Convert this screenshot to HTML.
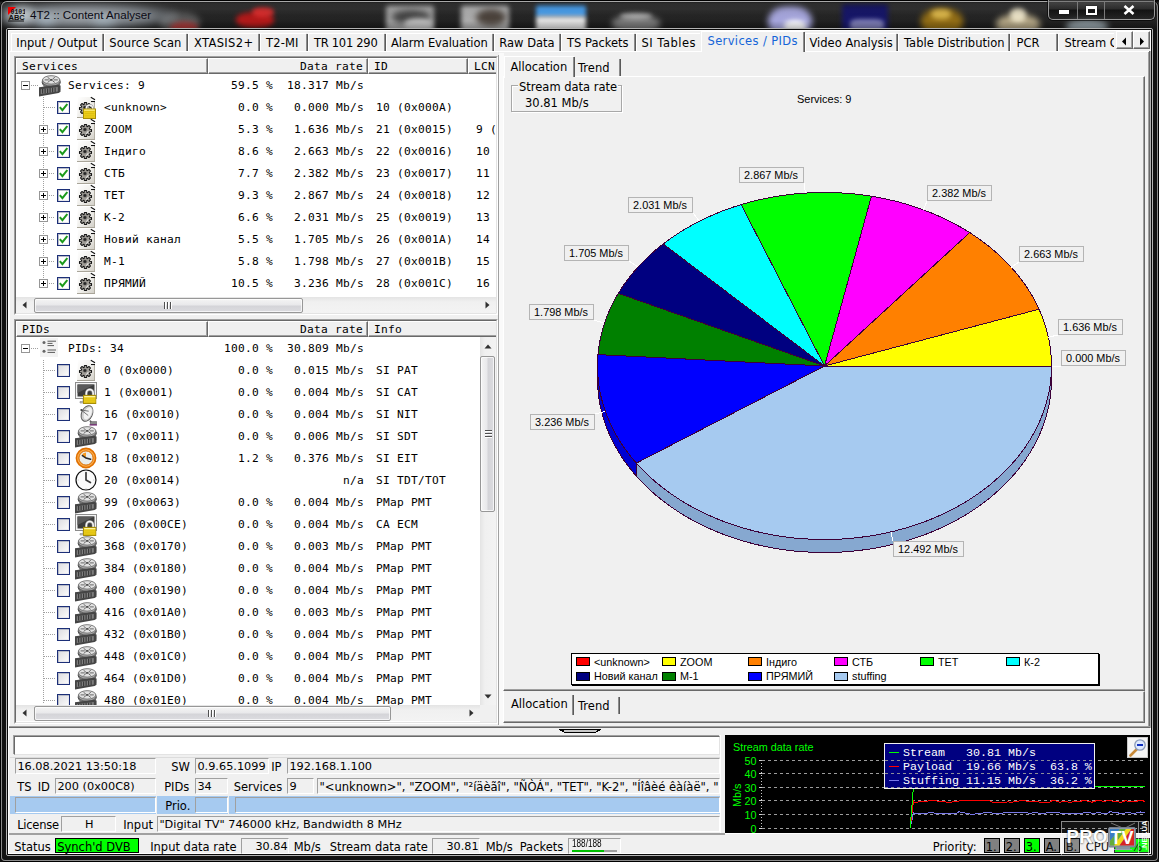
<!DOCTYPE html>
<html lang="en"><head><meta charset="utf-8"><title>4T2 :: Content Analyser</title>
<style>
html,body{margin:0;padding:0;background:#000}
#w{position:relative;width:1159px;height:862px;overflow:hidden;background:#2a2a2a;font-family:"DejaVu Sans","Liberation Sans",sans-serif;font-size:11.5px;line-height:14px;color:#000}
#w div,#w span,#w svg{position:absolute;box-sizing:border-box}
.t{white-space:pre;height:14px}
.m{font-family:"DejaVu Sans Mono","Liberation Mono",monospace;font-size:11.2px;letter-spacing:.26px;white-space:pre;height:14px;line-height:14px}
.ar{font-family:"Liberation Sans",sans-serif;font-size:12px;white-space:pre;line-height:14px}
.sep{width:2px;border-left:1px solid #8c8c8c;border-right:1px solid #5a5a5a}
.sunk2{border:1px solid;border-color:#a0a0a0 #fff #fff #a0a0a0}
.sunk2>i{position:absolute;left:0;top:0;right:0;bottom:0;border:1px solid;border-color:#696969 #e3e3e3 #e3e3e3 #696969}
.fld{border:1px solid;border-color:#a0a0a0 #fff #fff #a0a0a0}
.hd{background:#f0f0f0;border:1px solid;border-color:#fff #696969 #696969 #fff;box-shadow:inset -1px -1px 0 #a0a0a0}
.cb{width:13px;height:13px;border:1px solid #1c2f78;background:#fff;box-shadow:inset 1px 1px 0 #b8bcc8,inset -1px -1px 0 #e8e8ee}
.cb.e{background:linear-gradient(135deg,#dcdce0,#fcfcfc)}
.ex{width:9px;height:9px;border:1px solid #969696;background:#fff}
.ex:before{content:"";position:absolute;left:1px;top:3px;width:5px;height:1px;background:#000}
.ex.p:after{content:"";position:absolute;left:3px;top:1px;width:1px;height:5px;background:#000}
.dh{height:1px;background-image:linear-gradient(90deg,#a0a0a0 50%,transparent 50%);background-size:2px 1px}
.dv{width:1px;background-image:linear-gradient(180deg,#a0a0a0 50%,transparent 50%);background-size:1px 2px}
.sbh{background:linear-gradient(180deg,#e4e4e4,#f0f0f0 30%,#f3f3f3)}
.sbv{background:linear-gradient(90deg,#e4e4e4,#f0f0f0 30%,#f3f3f3)}
.thh{border:1px solid #979797;border-radius:2px;background:linear-gradient(180deg,#f4f4f4 0,#e9e9eb 45%,#d4d4d8 55%,#dcdce0 100%);box-shadow:inset 0 0 0 1px rgba(255,255,255,.7)}
.thv{border:1px solid #979797;border-radius:2px;background:linear-gradient(90deg,#f4f4f4 0,#e9e9eb 45%,#d4d4d8 55%,#dcdce0 100%);box-shadow:inset 0 0 0 1px rgba(255,255,255,.7)}
.lb{height:15px;border:1px solid #b4b4b4;background:#f0f0f0;font-family:"Liberation Sans",sans-serif;font-size:12px;line-height:13px;text-align:center;white-space:pre}
</style></head><body><div id="w">
<svg width="0" height="0" style="left:0;top:0"><defs>
<symbol id="film" viewBox="0 0 22 22">
 <ellipse cx="12.2" cy="7.6" rx="9" ry="5" fill="#8f8f8f" stroke="#4a4a4a" stroke-width="1"/>
 <ellipse cx="12.2" cy="6.2" rx="9" ry="5" fill="#a8a8a8" stroke="#5a5a5a" stroke-width=".9"/>
 <ellipse cx="12.2" cy="4.9" rx="8.6" ry="4.2" fill="#e2e2e2" stroke="#6a6a6a" stroke-width=".8"/>
 <ellipse cx="12.2" cy="4.9" rx="1.5" ry=".9" fill="#444"/>
 <path d="M5.6 4.9h4.2M14.6 4.9h4.2M8.6 2.3l2.2 1.7M15.8 2.3l-2.2 1.7M8.6 7.5l2.2-1.7M15.8 7.5l-2.2-1.7" stroke="#666" stroke-width="1"/>
 <path d="M4.5 10Q12 15.5 21.2 10v5Q12 19 4.5 14.5Z" fill="#7c7c7c"/>
 <path d="M0 12.2l19.6-2.4 1.9.9v6l-1.9 1.4L0 21.4Z" fill="#454545"/>
 <path d="M1.8 14.3l17-2.2v4.3l-17 2.6Z" fill="#7e7e7e"/>
 <path d="M3.6 14v4.6M6.1 13.7v4.6M8.6 13.4v4.6M11.1 13.1v4.6M13.6 12.8v4.6M16.1 12.5v4.6" stroke="#3a3a3a" stroke-width="1.2"/>
</symbol>
<symbol id="gear" viewBox="0 0 20 22">
 <defs><linearGradient id="pg" x1="0" y1="0" x2="1" y2="1"><stop offset="0" stop-color="#ffffff"/><stop offset=".55" stop-color="#efeeea"/><stop offset="1" stop-color="#cfccc4"/></linearGradient>
 <radialGradient id="gg" cx=".45" cy=".42" r=".6"><stop offset="0" stop-color="#181818"/><stop offset=".17" stop-color="#3a3a3a"/><stop offset=".3" stop-color="#9a9791"/><stop offset="1" stop-color="#b4b1ab"/></radialGradient></defs>
 <path d="M1 1h13l4 3.5V22H0Z" fill="url(#pg)"/>
 <path d="M17.5 5v17" stroke="#b3afa4" stroke-width="1"/>
 <path d="M0 21.5h18" stroke="#a9a599" stroke-width="1"/>
 <path d="M14 1.2l4 2.6v1.8h-4Z" fill="#fff"/>
 <path d="M13.8 1.2l4.2 2.6" fill="none" stroke="#111" stroke-width="1.1"/>
 <path d="M14 5.5h4" stroke="#111" stroke-width="1.1"/>
 <g transform="translate(8.5,12.5)">
  <path d="M-1.10 -6.00L1.10 -6.00L1.33 -4.09L1.96 -3.83L3.46 -5.02L5.02 -3.46L3.83 -1.96L4.09 -1.33L6.00 -1.10L6.00 1.10L4.09 1.33L3.83 1.96L5.02 3.46L3.46 5.02L1.96 3.83L1.33 4.09L1.10 6.00L-1.10 6.00L-1.33 4.09L-1.96 3.83L-3.46 5.02L-5.02 3.46L-3.83 1.96L-4.09 1.33L-6.00 1.10L-6.00 -1.10L-4.09 -1.33L-3.83 -1.96L-5.02 -3.46L-3.46 -5.02L-1.96 -3.83L-1.33 -4.09Z" fill="url(#gg)" stroke="#141414" stroke-width="1.05" stroke-linejoin="round"/>
  <path d="M2.6 .6a2.8 2.8 0 0 1-2.2 2.4" fill="none" stroke="#f4f4f4" stroke-width="1"/>
 </g>
</symbol>
<symbol id="lock" viewBox="0 0 13 14" preserveAspectRatio="none">
 <path d="M3.2 7V4.6a3.3 3.3 0 0 1 6.600 0V7" fill="none" stroke="#8c8c8c" stroke-width="2.600"/>
 <path d="M3.2 7V4.6a3.3 3.3 0 0 1 6.600 0V7" fill="none" stroke="#f6f6f6" stroke-width="1.500"/>
 <rect x=".5" y="6.500" width="12" height="7" fill="#f0d21e" stroke="#a88e08" stroke-width="1"/>
 <path d="M1.500 8.800h10M1.500 10.600h10M1.500 12.300h10" stroke="#d4b40c" stroke-width=".7"/>
 <path d="M1.200 7.500h10.600" stroke="#fdf3a0" stroke-width="1"/>
</symbol>
<symbol id="mon" viewBox="0 0 22 22">
 <rect x=".5" y=".5" width="21" height="16" fill="#f4f4f4" stroke="#8c8c8c"/>
 <rect x="2.5" y="2.5" width="17" height="12" fill="#3c3c3c"/>
 <path d="M2.5 2.5h17L2.5 11Z" fill="#5a5a5a"/>
 <path d="M8 17h6v2.5h3v1.5H5v-1.5h3Z" fill="#bdbdbd" stroke="#8a8a8a" stroke-width=".6"/>
</symbol>
<symbol id="dish" viewBox="0 0 22 22">
 <ellipse cx="11" cy="9.5" rx="5.4" ry="8.2" transform="rotate(24 11 9.5)" fill="#cfcfcf" stroke="#555" stroke-width=".9"/>
 <ellipse cx="11.8" cy="9.3" rx="4" ry="7" transform="rotate(24 11.8 9.3)" fill="#f2f2f2" stroke="#b9b9b9" stroke-width=".5"/>
 <path d="M5.2 6l7 5.5M5.2 6l7.5 1.2" stroke="#666" stroke-width=".9"/>
 <circle cx="5.4" cy="6" r="1.1" fill="#444"/>
 <path d="M14 16.5l1.5 2.2" stroke="#777" stroke-width="1.6"/>
 <rect x="14.2" y="17.6" width="6.4" height="2.6" fill="#8a8a8a" stroke="#555" stroke-width=".5"/>
 <path d="M13.6 20.9h7.4" stroke="#601060" stroke-width="1.2"/>
</symbol>
<symbol id="clko" viewBox="0 0 22 22">
 <circle cx="11" cy="11" r="9.6" fill="#f08a18" stroke="#e07000" stroke-width="1.6"/>
 <circle cx="11" cy="11" r="8.2" fill="none" stroke="#ffc070" stroke-width=".7"/>
 <circle cx="11" cy="11" r="7" fill="#e9eceb" stroke="#d86c00" stroke-width=".8"/>
 <path d="M11 11L6.6 8.4A5.2 5.2 0 0 1 11 5.4Z" fill="#f59a20"/>
 <path d="M7.4 8.6L11 11l4.6 1.3" fill="none" stroke="#26282c" stroke-width="1.5" stroke-linecap="round"/>
</symbol>
<symbol id="clkw" viewBox="0 0 22 22">
 <circle cx="11" cy="11" r="10" fill="#fafafa" stroke="#101010" stroke-width="1.2"/>
 <path d="M11 19.3v.9M2.8 11h.9M19.2 11h-.9" stroke="#b0b0b0" stroke-width=".8"/>
 <path d="M11 3.6V11l4.4 2.6" fill="none" stroke="#3a3a3a" stroke-width="1.7" stroke-linecap="round" stroke-linejoin="round"/>
</symbol>
<symbol id="lst" viewBox="0 0 18 19">
 <rect width="18" height="19" fill="#f2f2f2"/>
 <circle cx="4" cy="4.500" r="1.500" fill="#666"/><circle cx="4" cy="13.300" r="1.500" fill="#666"/>
 <path d="M7.500 3.200h8.500M7.500 5.400h5M7.500 7.600h6.500M7.500 12h8.500M7.500 14.400h7.500" stroke="#5a5a5a" stroke-width="1"/>
</symbol>
<symbol id="lock2" viewBox="0 0 13 15" preserveAspectRatio="none">
 <path d="M3.400 6V4.200a3.100 3.100 0 0 1 6.200 0V6" fill="none" stroke="#8c8c8c" stroke-width="2.400"/>
 <path d="M3.400 6V4.200a3.100 3.100 0 0 1 6.200 0V6" fill="none" stroke="#f6f6f6" stroke-width="1.300"/>
 <rect x=".5" y="5" width="12" height="9.500" fill="#f0d21e" stroke="#a88e08" stroke-width="1"/>
 <path d="M1.500 7.600h10M1.500 9.400h10M1.500 11.200h10M1.500 13h10" stroke="#d4b40c" stroke-width=".7"/>
 <path d="M1.200 6.100h10.600" stroke="#fdf3a0" stroke-width="1"/>
</symbol>
<symbol id="chk" viewBox="0 0 9 9"><path d="M.8 4.2l2.6 3L8.3 1" fill="none" stroke="#1c9a1c" stroke-width="2"/></symbol>
</defs></svg>

<div style="left:0px;top:0px;width:1159px;height:30px;background:linear-gradient(180deg,#0c0c0c 0,#3b3b3b 10%,#262626 50%,#1a1a1a 100%)"></div>
<div style="left:0;top:0;width:1159px;height:28px;overflow:hidden"><div style="left:160px;top:12px;width:40px;height:22px;background:#7a7a7a;opacity:0.6;filter:blur(3px);border-radius:45%"></div><div style="left:170px;top:22px;width:28px;height:12px;background:#b83030;opacity:0.8;filter:blur(2.5px);border-radius:45%"></div><div style="left:236px;top:12px;width:38px;height:16px;background:#c01818;opacity:0.9;filter:blur(2.5px);border-radius:45%"></div><div style="left:252px;top:7px;width:22px;height:10px;background:#e83030;opacity:0.85;filter:blur(2px);border-radius:45%"></div><div style="left:386px;top:5px;width:48px;height:30px;background:#cdcdcd;opacity:0.75;filter:blur(2.5px);border-radius:8%"></div><div style="left:392px;top:10px;width:38px;height:14px;background:#2a2a2a;opacity:0.8;filter:blur(3px);border-radius:50%"></div><div style="left:404px;top:18px;width:28px;height:14px;background:#c4c4c4;opacity:0.9;filter:blur(2.5px);border-radius:45%"></div><div style="left:461px;top:5px;width:48px;height:30px;background:#dadada;opacity:0.75;filter:blur(2.5px);border-radius:8%"></div><div style="left:476px;top:9px;width:30px;height:17px;background:#3a3028;opacity:0.85;filter:blur(3px);border-radius:50%"></div><div style="left:536px;top:5px;width:50px;height:12px;background:#4aa2f2;opacity:0.95;filter:blur(2px);border-radius:8%"></div><div style="left:536px;top:16px;width:50px;height:16px;background:#f2f2f2;opacity:0.9;filter:blur(2px);border-radius:8%"></div><div style="left:612px;top:15px;width:48px;height:18px;background:#a8a8a8;opacity:0.65;filter:blur(3px);border-radius:45%"></div><div style="left:620px;top:13px;width:32px;height:6px;background:#e0e0e0;opacity:0.6;filter:blur(2px);border-radius:45%"></div><div style="left:768px;top:6px;width:44px;height:32px;background:#b4b4f0;opacity:0.9;filter:blur(3px);border-radius:45%"></div><div style="left:784px;top:20px;width:22px;height:14px;background:#ffffff;opacity:0.95;filter:blur(2.5px);border-radius:45%"></div><div style="left:842px;top:4px;width:46px;height:30px;background:#16166c;opacity:0.95;filter:blur(2.5px);border-radius:8%"></div><div style="left:850px;top:19px;width:34px;height:12px;background:#9494c4;opacity:0.8;filter:blur(2px);border-radius:30%"></div><div style="left:921px;top:8px;width:42px;height:28px;background:#9c7414;opacity:0.9;filter:blur(3px);border-radius:45%"></div><div style="left:931px;top:9px;width:20px;height:10px;background:#ecc858;opacity:0.8;filter:blur(2.5px);border-radius:45%"></div><div style="left:996px;top:14px;width:44px;height:22px;background:#d4c49c;opacity:0.8;filter:blur(3px);border-radius:45%"></div><div style="left:1010px;top:8px;width:16px;height:14px;background:#f4ecd0;opacity:0.9;filter:blur(2.5px);border-radius:45%"></div><div style="left:1066px;top:20px;width:42px;height:14px;background:#c0d2dc;opacity:0.7;filter:blur(3px);border-radius:45%"></div></div>
<div style="left:0px;top:0px;width:1159px;height:30px;background:linear-gradient(180deg,rgba(0,0,0,.8) 0,rgba(0,0,0,.25) 10%,rgba(0,0,0,.05) 30%,rgba(0,0,0,0) 70%,rgba(0,0,0,.3) 100%)"></div>
<div style="left:0px;top:30px;width:8px;height:832px;background:#121212"></div>
<div style="left:1151px;top:30px;width:8px;height:832px;background:#121212"></div>
<div style="left:0px;top:854px;width:1159px;height:8px;background:#121212"></div>
<div style="left:0px;top:0px;width:1159px;height:862px;border:1px solid #000;border-radius:7px 7px 5px 5px"></div>
<div style="left:1px;top:1px;width:1157px;height:860px;border:1px solid #8a8a8a;border-radius:6px 6px 4px 4px;border-top-color:#a8a8a8"></div>
<div style="left:6px;top:28px;width:1147px;height:828px;border:1px solid #b4b4b4;border-radius:2px"></div>
<div style="left:7px;top:29px;width:1145px;height:826px;border:1px solid #0a0a0a;border-radius:1px"></div>
<div style="left:2px;top:3px;width:176px;height:26px;background:radial-gradient(ellipse at 45% 50%,rgba(190,196,202,.85) 0,rgba(160,168,176,.7) 50%,rgba(120,128,136,0) 80%);filter:blur(3px)"></div>
<div style="left:8px;top:6px;width:26px;height:18px;background:rgba(225,235,240,.6);filter:blur(4px);border-radius:50%"></div>
<div style="left:36px;top:14px;width:20px;height:12px;background:rgba(200,225,240,.45);filter:blur(4px);border-radius:50%"></div>
<div style="left:92px;top:16px;width:24px;height:10px;background:rgba(200,225,240,.4);filter:blur(4px);border-radius:50%"></div>
<svg style="left:8px;top:7px" width="17" height="15" viewBox="0 0 17 15"><rect width="17" height="15" fill="#e8e8e8" opacity=".0"/><path d="M0 0h8L0 8Z" fill="#f00000"/><text x="2.5" y="6.5" font-family="Liberation Mono,monospace" font-size="6.5" font-weight="bold" fill="#111">0101</text><text x=".5" y="12.5" font-family="Liberation Sans,sans-serif" font-size="7.5" font-weight="bold" fill="#111">ABC</text><path d="M0 14h16" stroke="#111" stroke-width="1"/></svg>
<span class="t" style="left:30px;top:8px;font-family:&quot;Liberation Sans&quot;,sans-serif;font-size:11.6px;color:#0a0a14">4T2 :: Content Analyser</span>
<div style="left:1048px;top:0px;width:107px;height:20px;border:1px solid #9a9a9a;border-top:none;border-radius:0 0 5px 5px;background:linear-gradient(180deg,rgba(100,100,100,.55),rgba(40,40,40,.5) 48%,rgba(5,5,5,.65) 52%,rgba(40,40,40,.5));box-shadow:0 0 0 1px rgba(0,0,0,.6)"></div>
<div style="left:1077px;top:1px;width:1px;height:18px;background:#7a7a7a"></div>
<div style="left:1104px;top:1px;width:1px;height:18px;background:#7a7a7a"></div>
<div style="left:1059px;top:10px;width:10px;height:4px;background:#fff;box-shadow:0 0 1px #000"></div>
<div style="left:1086px;top:6px;width:11px;height:9px;border:2px solid #fff;border-top-width:3px;box-shadow:0 0 1px #000"></div>
<svg style="left:1123px;top:5px" width="12" height="10" viewBox="0 0 12 10"><path d="M1.5 1l9 8M10.5 1l-9 8" stroke="#fff" stroke-width="2.6"/></svg>
<div style="left:8px;top:30px;width:1143px;height:824px;background:#f0f0f0;border:1px solid #fff"></div>
<div style="left:9px;top:51px;width:1141px;height:1px;background:#fff"></div>
<div style="left:9px;top:51px;width:1px;height:676px;background:#fff"></div>
<div style="left:1148px;top:52px;width:1px;height:676px;background:#a0a0a0"></div>
<div style="left:1149px;top:51px;width:1px;height:677px;background:#696969"></div>
<div style="left:1150px;top:51px;width:1px;height:677px;background:#b0b0b0"></div>
<span class="t" style="left:16.3px;top:36px;letter-spacing:0px">Input / Output</span>
<div style="left:11px;top:33px;width:91px;height:18px;border-left:1px solid #fff;border-top:1px solid #fff"></div>
<div class="sep" style="left:102px;top:34px;width:2px;height:17px;"></div>
<span class="t" style="left:109.3px;top:36px;letter-spacing:0.1px">Source Scan</span>
<div style="left:104px;top:33px;width:82px;height:18px;border-left:1px solid #fff;border-top:1px solid #fff"></div>
<div class="sep" style="left:186px;top:34px;width:2px;height:17px;"></div>
<span class="t" style="left:194px;top:36px;letter-spacing:0.35px">XTASIS2+</span>
<div style="left:188px;top:33px;width:70px;height:18px;border-left:1px solid #fff;border-top:1px solid #fff"></div>
<div class="sep" style="left:258px;top:34px;width:2px;height:17px;"></div>
<span class="t" style="left:266px;top:36px;letter-spacing:0.15px">T2-MI</span>
<div style="left:260px;top:33px;width:46px;height:18px;border-left:1px solid #fff;border-top:1px solid #fff"></div>
<div class="sep" style="left:306px;top:34px;width:2px;height:17px;"></div>
<span class="t" style="left:314px;top:36px;letter-spacing:-0.28px">TR 101 290</span>
<div style="left:308px;top:33px;width:76px;height:18px;border-left:1px solid #fff;border-top:1px solid #fff"></div>
<div class="sep" style="left:384px;top:34px;width:2px;height:17px;"></div>
<span class="t" style="left:391px;top:36px;letter-spacing:-0.1px">Alarm Evaluation</span>
<div style="left:386px;top:33px;width:106px;height:18px;border-left:1px solid #fff;border-top:1px solid #fff"></div>
<div class="sep" style="left:492px;top:34px;width:2px;height:17px;"></div>
<span class="t" style="left:499.3px;top:36px;letter-spacing:0px">Raw Data</span>
<div style="left:494px;top:33px;width:65px;height:18px;border-left:1px solid #fff;border-top:1px solid #fff"></div>
<div class="sep" style="left:559px;top:34px;width:2px;height:17px;"></div>
<span class="t" style="left:567px;top:36px;letter-spacing:0px">TS Packets</span>
<div style="left:561px;top:33px;width:73px;height:18px;border-left:1px solid #fff;border-top:1px solid #fff"></div>
<div class="sep" style="left:634px;top:34px;width:2px;height:17px;"></div>
<span class="t" style="left:641.5px;top:36px;letter-spacing:0.5px">SI Tables</span>
<div style="left:636px;top:33px;width:64px;height:18px;border-left:1px solid #fff;border-top:1px solid #fff"></div>
<div style="left:701px;top:31px;width:103px;height:21px;background:#f0f0f0;border-left:1px solid #fff;border-top:1px solid #fff"></div>
<div class="sep" style="left:803px;top:32px;width:2px;height:20px;"></div>
<span class="t" style="left:707.5px;top:34px;color:#1565d8;letter-spacing:.36px">Services / PIDs</span>
<span class="t" style="left:809.5px;top:36px;letter-spacing:0px">Video Analysis</span>
<div style="left:805px;top:33px;width:91px;height:18px;border-left:1px solid #fff;border-top:1px solid #fff"></div>
<div class="sep" style="left:896px;top:34px;width:2px;height:17px;"></div>
<span class="t" style="left:904px;top:36px;letter-spacing:0px">Table Distribution</span>
<div style="left:898px;top:33px;width:110px;height:18px;border-left:1px solid #fff;border-top:1px solid #fff"></div>
<div class="sep" style="left:1008px;top:34px;width:2px;height:17px;"></div>
<span class="t" style="left:1016.5px;top:36px;letter-spacing:0px">PCR</span>
<div style="left:1010px;top:33px;width:46px;height:18px;border-left:1px solid #fff;border-top:1px solid #fff"></div>
<div class="sep" style="left:1056px;top:34px;width:2px;height:17px;"></div>
<span class="t" style="left:1064.5px;top:36px;letter-spacing:0px">Stream C</span>
<div style="left:1058px;top:33px;width:93px;height:18px;border-left:1px solid #fff;border-top:1px solid #fff"></div>
<div style="left:1114px;top:31px;width:36px;height:20px;background:#f0f0f0"></div>
<div style="left:1116px;top:31px;width:17px;height:18px;background:#f0f0f0;border:1px solid;border-color:#fff #696969 #696969 #fff;box-shadow:inset -1px -1px 0 #a0a0a0"></div>
<div style="left:1133px;top:31px;width:17px;height:18px;background:#f0f0f0;border:1px solid;border-color:#fff #696969 #696969 #fff;box-shadow:inset -1px -1px 0 #a0a0a0"></div>
<svg style="left:1121px;top:37px" width="6" height="9"><path d="M5 0.5v8L1 4.5Z" fill="#000"/></svg>
<svg style="left:1139px;top:37px" width="6" height="9"><path d="M1 0.5v8L5 4.5Z" fill="#000"/></svg>
<div class="sunk2" style="left:14px;top:56px;width:484px;height:259px;"><i></i></div>
<div style="left:16px;top:58px;width:480px;height:255px;background:#fff;overflow:hidden"></div>
<div class="hd" style="left:16px;top:58px;width:192px;height:16px;"></div>
<span class="m" style="left:22px;top:60px;">Services</span>
<div class="hd" style="left:208px;top:58px;width:160px;height:16px;"></div>
<span class="m" style="right:796px;top:60px;">Data rate</span>
<div class="hd" style="left:368px;top:58px;width:100px;height:16px;"></div>
<span class="m" style="left:374px;top:60px;">ID</span>
<div class="hd" style="left:468px;top:58px;width:100px;height:16px;"></div>
<span class="m" style="left:474px;top:60px;">LCN</span>
<div style="left:496px;top:58px;width:80px;height:16px;background:#f0f0f0"></div>
<div class="ex" style="left:21px;top:81px;width:9px;height:9px;"></div>
<div class="dh" style="left:31px;top:85px;width:7px;height:1px;"></div>
<svg style="left:39px;top:75px" width="22" height="22"><use href="#film"/></svg>
<span class="m" style="left:68px;top:79px;">Services: 9</span>
<span class="m" style="right:795px;top:79px;"> 59.5 %  18.317 Mb/s</span>
<div class="dv" style="left:43px;top:97px;width:1px;height:186px;"></div>
<div class="dh" style="left:44px;top:107px;width:11px;height:1px;"></div>
<div class="cb" style="left:57px;top:101px;width:13px;height:13px;"><svg style="left:1px;top:1px" width="9" height="9"><use href="#chk"/></svg></div>
<svg style="left:77px;top:96px" width="20" height="22"><use href="#gear"/></svg>
<svg style="left:83px;top:104px" width="13" height="15"><use href="#lock2"/></svg>
<span class="m" style="left:104px;top:101px;">&lt;unknown&gt;</span>
<span class="m" style="right:795px;top:101px;">  0.0 %   0.000 Mb/s</span>
<span class="m" style="left:376px;top:101px;">10 (0x000A)</span>
<div class="ex p" style="left:39px;top:125px;width:9px;height:9px;"></div>
<div class="dh" style="left:49px;top:129px;width:6px;height:1px;"></div>
<div class="cb" style="left:57px;top:123px;width:13px;height:13px;"><svg style="left:1px;top:1px" width="9" height="9"><use href="#chk"/></svg></div>
<svg style="left:77px;top:118px" width="20" height="22"><use href="#gear"/></svg>
<span class="m" style="left:104px;top:123px;">ZOOM</span>
<span class="m" style="right:795px;top:123px;">  5.3 %   1.636 Mb/s</span>
<span class="m" style="left:376px;top:123px;">21 (0x0015)</span>
<span class="m" style="left:476px;top:123px;">9 (</span>
<div class="ex p" style="left:39px;top:147px;width:9px;height:9px;"></div>
<div class="dh" style="left:49px;top:151px;width:6px;height:1px;"></div>
<div class="cb" style="left:57px;top:145px;width:13px;height:13px;"><svg style="left:1px;top:1px" width="9" height="9"><use href="#chk"/></svg></div>
<svg style="left:77px;top:140px" width="20" height="22"><use href="#gear"/></svg>
<span class="m" style="left:104px;top:145px;">Індиго</span>
<span class="m" style="right:795px;top:145px;">  8.6 %   2.663 Mb/s</span>
<span class="m" style="left:376px;top:145px;">22 (0x0016)</span>
<span class="m" style="left:476px;top:145px;">10</span>
<div class="ex p" style="left:39px;top:169px;width:9px;height:9px;"></div>
<div class="dh" style="left:49px;top:173px;width:6px;height:1px;"></div>
<div class="cb" style="left:57px;top:167px;width:13px;height:13px;"><svg style="left:1px;top:1px" width="9" height="9"><use href="#chk"/></svg></div>
<svg style="left:77px;top:162px" width="20" height="22"><use href="#gear"/></svg>
<span class="m" style="left:104px;top:167px;">СТБ</span>
<span class="m" style="right:795px;top:167px;">  7.7 %   2.382 Mb/s</span>
<span class="m" style="left:376px;top:167px;">23 (0x0017)</span>
<span class="m" style="left:476px;top:167px;">11</span>
<div class="ex p" style="left:39px;top:191px;width:9px;height:9px;"></div>
<div class="dh" style="left:49px;top:195px;width:6px;height:1px;"></div>
<div class="cb" style="left:57px;top:189px;width:13px;height:13px;"><svg style="left:1px;top:1px" width="9" height="9"><use href="#chk"/></svg></div>
<svg style="left:77px;top:184px" width="20" height="22"><use href="#gear"/></svg>
<span class="m" style="left:104px;top:189px;">ТЕТ</span>
<span class="m" style="right:795px;top:189px;">  9.3 %   2.867 Mb/s</span>
<span class="m" style="left:376px;top:189px;">24 (0x0018)</span>
<span class="m" style="left:476px;top:189px;">12</span>
<div class="ex p" style="left:39px;top:213px;width:9px;height:9px;"></div>
<div class="dh" style="left:49px;top:217px;width:6px;height:1px;"></div>
<div class="cb" style="left:57px;top:211px;width:13px;height:13px;"><svg style="left:1px;top:1px" width="9" height="9"><use href="#chk"/></svg></div>
<svg style="left:77px;top:206px" width="20" height="22"><use href="#gear"/></svg>
<span class="m" style="left:104px;top:211px;">К-2</span>
<span class="m" style="right:795px;top:211px;">  6.6 %   2.031 Mb/s</span>
<span class="m" style="left:376px;top:211px;">25 (0x0019)</span>
<span class="m" style="left:476px;top:211px;">13</span>
<div class="ex p" style="left:39px;top:235px;width:9px;height:9px;"></div>
<div class="dh" style="left:49px;top:239px;width:6px;height:1px;"></div>
<div class="cb" style="left:57px;top:233px;width:13px;height:13px;"><svg style="left:1px;top:1px" width="9" height="9"><use href="#chk"/></svg></div>
<svg style="left:77px;top:228px" width="20" height="22"><use href="#gear"/></svg>
<span class="m" style="left:104px;top:233px;">Новий канал</span>
<span class="m" style="right:795px;top:233px;">  5.5 %   1.705 Mb/s</span>
<span class="m" style="left:376px;top:233px;">26 (0x001A)</span>
<span class="m" style="left:476px;top:233px;">14</span>
<div class="ex p" style="left:39px;top:257px;width:9px;height:9px;"></div>
<div class="dh" style="left:49px;top:261px;width:6px;height:1px;"></div>
<div class="cb" style="left:57px;top:255px;width:13px;height:13px;"><svg style="left:1px;top:1px" width="9" height="9"><use href="#chk"/></svg></div>
<svg style="left:77px;top:250px" width="20" height="22"><use href="#gear"/></svg>
<span class="m" style="left:104px;top:255px;">М-1</span>
<span class="m" style="right:795px;top:255px;">  5.8 %   1.798 Mb/s</span>
<span class="m" style="left:376px;top:255px;">27 (0x001B)</span>
<span class="m" style="left:476px;top:255px;">15</span>
<div class="ex p" style="left:39px;top:279px;width:9px;height:9px;"></div>
<div class="dh" style="left:49px;top:283px;width:6px;height:1px;"></div>
<div class="cb" style="left:57px;top:277px;width:13px;height:13px;"><svg style="left:1px;top:1px" width="9" height="9"><use href="#chk"/></svg></div>
<svg style="left:77px;top:272px" width="20" height="22"><use href="#gear"/></svg>
<span class="m" style="left:104px;top:277px;">ПРЯМИЙ</span>
<span class="m" style="right:795px;top:277px;"> 10.5 %   3.236 Mb/s</span>
<span class="m" style="left:376px;top:277px;">28 (0x001C)</span>
<span class="m" style="left:476px;top:277px;">16</span>
<div style="left:496px;top:74px;width:2px;height:240px;background:#f0f0f0"></div>
<div style="left:497px;top:57px;width:1px;height:257px;background:#fff"></div>
<div style="left:496px;top:58px;width:1px;height:255px;background:#e3e3e3"></div>
<div class="sbh" style="left:16px;top:297px;width:480px;height:16px;"></div>
<div class="thh" style="left:34px;top:298px;width:269px;height:15px;"></div>
<div style="left:164px;top:302px;width:1px;height:7px;background:#505050;box-shadow:1px 0 0 #fff"></div>
<div style="left:167px;top:302px;width:1px;height:7px;background:#505050;box-shadow:1px 0 0 #fff"></div>
<div style="left:170px;top:302px;width:1px;height:7px;background:#505050;box-shadow:1px 0 0 #fff"></div>
<svg style="left:22px;top:301px" width="5" height="8"><path d="M4.5 .5v7L.5 4Z" fill="#303030"/></svg>
<svg style="left:485px;top:301px" width="5" height="8"><path d="M.5 .5v7l4-3.5Z" fill="#303030"/></svg>
<div class="sunk2" style="left:14px;top:319px;width:484px;height:405px;"><i></i></div>
<div style="left:16px;top:321px;width:480px;height:401px;background:#fff"></div>
<div class="hd" style="left:16px;top:321px;width:192px;height:16px;"></div>
<span class="m" style="left:22px;top:323px;">PIDs</span>
<div class="hd" style="left:208px;top:321px;width:160px;height:16px;"></div>
<span class="m" style="right:796px;top:323px;">Data rate</span>
<div class="hd" style="left:368px;top:321px;width:132px;height:16px;"></div>
<span class="m" style="left:374px;top:323px;">Info</span>
<div class="ex" style="left:21px;top:344px;width:9px;height:9px;"></div>
<div class="dh" style="left:31px;top:348px;width:7px;height:1px;"></div>
<svg style="left:40px;top:338px" width="18" height="19"><use href="#lst"/></svg>
<span class="m" style="left:68px;top:342px;">PIDs: 34</span>
<span class="m" style="right:795px;top:342px;">100.0 %  30.809 Mb/s</span>
<div class="dv" style="left:43px;top:360px;width:1px;height:344px;"></div>
<div style="left:0;top:0;width:1159px;height:705px;overflow:hidden"><div class="dh" style="left:44px;top:370px;width:11px;height:1px;"></div>
<div class="cb e" style="left:57px;top:364px;width:13px;height:13px;"></div>
<svg style="left:77px;top:359px" width="20" height="22"><use href="#gear"/></svg>
<span class="m" style="left:104px;top:364px;">0 (0x0000)</span>
<span class="m" style="right:795px;top:364px;">  0.0 %   0.015 Mb/s</span>
<span class="m" style="left:376px;top:364px;">SI PAT</span>
<div class="dh" style="left:44px;top:392px;width:11px;height:1px;"></div>
<div class="cb e" style="left:57px;top:386px;width:13px;height:13px;"></div>
<svg style="left:75px;top:382px" width="22" height="22"><use href="#mon"/></svg>
<svg style="left:83px;top:388px" width="13.5" height="16"><use href="#lock"/></svg>
<span class="m" style="left:104px;top:386px;">1 (0x0001)</span>
<span class="m" style="right:795px;top:386px;">  0.0 %   0.004 Mb/s</span>
<span class="m" style="left:376px;top:386px;">SI CAT</span>
<div class="dh" style="left:44px;top:414px;width:11px;height:1px;"></div>
<div class="cb e" style="left:57px;top:408px;width:13px;height:13px;"></div>
<svg style="left:76px;top:404px" width="22" height="22"><use href="#dish"/></svg>
<span class="m" style="left:104px;top:408px;">16 (0x0010)</span>
<span class="m" style="right:795px;top:408px;">  0.0 %   0.004 Mb/s</span>
<span class="m" style="left:376px;top:408px;">SI NIT</span>
<div class="dh" style="left:44px;top:436px;width:11px;height:1px;"></div>
<div class="cb e" style="left:57px;top:430px;width:13px;height:13px;"></div>
<svg style="left:75px;top:426px" width="22" height="22"><use href="#film"/></svg>
<span class="m" style="left:104px;top:430px;">17 (0x0011)</span>
<span class="m" style="right:795px;top:430px;">  0.0 %   0.006 Mb/s</span>
<span class="m" style="left:376px;top:430px;">SI SDT</span>
<div class="dh" style="left:44px;top:458px;width:11px;height:1px;"></div>
<div class="cb e" style="left:57px;top:452px;width:13px;height:13px;"></div>
<svg style="left:74.6px;top:447.1px" width="22" height="22"><use href="#clko"/></svg>
<span class="m" style="left:104px;top:452px;">18 (0x0012)</span>
<span class="m" style="right:795px;top:452px;">  1.2 %   0.376 Mb/s</span>
<span class="m" style="left:376px;top:452px;">SI EIT</span>
<div class="dh" style="left:44px;top:480px;width:11px;height:1px;"></div>
<div class="cb e" style="left:57px;top:474px;width:13px;height:13px;"></div>
<svg style="left:74.8px;top:469.1px" width="22" height="22"><use href="#clkw"/></svg>
<span class="m" style="left:104px;top:474px;">20 (0x0014)</span>
<span class="m" style="right:795px;top:474px;">n/a</span>
<span class="m" style="left:376px;top:474px;">SI TDT/TOT</span>
<div class="dh" style="left:44px;top:502px;width:11px;height:1px;"></div>
<div class="cb e" style="left:57px;top:496px;width:13px;height:13px;"></div>
<svg style="left:75px;top:492px" width="22" height="22"><use href="#film"/></svg>
<span class="m" style="left:104px;top:496px;">99 (0x0063)</span>
<span class="m" style="right:795px;top:496px;">  0.0 %   0.004 Mb/s</span>
<span class="m" style="left:376px;top:496px;">PMap PMT</span>
<div class="dh" style="left:44px;top:524px;width:11px;height:1px;"></div>
<div class="cb e" style="left:57px;top:518px;width:13px;height:13px;"></div>
<svg style="left:75px;top:514px" width="22" height="22"><use href="#mon"/></svg>
<svg style="left:83px;top:520px" width="13.5" height="16"><use href="#lock"/></svg>
<span class="m" style="left:104px;top:518px;">206 (0x00CE)</span>
<span class="m" style="right:795px;top:518px;">  0.0 %   0.004 Mb/s</span>
<span class="m" style="left:376px;top:518px;">CA ECM</span>
<div class="dh" style="left:44px;top:546px;width:11px;height:1px;"></div>
<div class="cb e" style="left:57px;top:540px;width:13px;height:13px;"></div>
<svg style="left:75px;top:536px" width="22" height="22"><use href="#film"/></svg>
<span class="m" style="left:104px;top:540px;">368 (0x0170)</span>
<span class="m" style="right:795px;top:540px;">  0.0 %   0.003 Mb/s</span>
<span class="m" style="left:376px;top:540px;">PMap PMT</span>
<div class="dh" style="left:44px;top:568px;width:11px;height:1px;"></div>
<div class="cb e" style="left:57px;top:562px;width:13px;height:13px;"></div>
<svg style="left:75px;top:558px" width="22" height="22"><use href="#film"/></svg>
<span class="m" style="left:104px;top:562px;">384 (0x0180)</span>
<span class="m" style="right:795px;top:562px;">  0.0 %   0.004 Mb/s</span>
<span class="m" style="left:376px;top:562px;">PMap PMT</span>
<div class="dh" style="left:44px;top:590px;width:11px;height:1px;"></div>
<div class="cb e" style="left:57px;top:584px;width:13px;height:13px;"></div>
<svg style="left:75px;top:580px" width="22" height="22"><use href="#film"/></svg>
<span class="m" style="left:104px;top:584px;">400 (0x0190)</span>
<span class="m" style="right:795px;top:584px;">  0.0 %   0.004 Mb/s</span>
<span class="m" style="left:376px;top:584px;">PMap PMT</span>
<div class="dh" style="left:44px;top:612px;width:11px;height:1px;"></div>
<div class="cb e" style="left:57px;top:606px;width:13px;height:13px;"></div>
<svg style="left:75px;top:602px" width="22" height="22"><use href="#film"/></svg>
<span class="m" style="left:104px;top:606px;">416 (0x01A0)</span>
<span class="m" style="right:795px;top:606px;">  0.0 %   0.003 Mb/s</span>
<span class="m" style="left:376px;top:606px;">PMap PMT</span>
<div class="dh" style="left:44px;top:634px;width:11px;height:1px;"></div>
<div class="cb e" style="left:57px;top:628px;width:13px;height:13px;"></div>
<svg style="left:75px;top:624px" width="22" height="22"><use href="#film"/></svg>
<span class="m" style="left:104px;top:628px;">432 (0x01B0)</span>
<span class="m" style="right:795px;top:628px;">  0.0 %   0.004 Mb/s</span>
<span class="m" style="left:376px;top:628px;">PMap PMT</span>
<div class="dh" style="left:44px;top:656px;width:11px;height:1px;"></div>
<div class="cb e" style="left:57px;top:650px;width:13px;height:13px;"></div>
<svg style="left:75px;top:646px" width="22" height="22"><use href="#film"/></svg>
<span class="m" style="left:104px;top:650px;">448 (0x01C0)</span>
<span class="m" style="right:795px;top:650px;">  0.0 %   0.004 Mb/s</span>
<span class="m" style="left:376px;top:650px;">PMap PMT</span>
<div class="dh" style="left:44px;top:678px;width:11px;height:1px;"></div>
<div class="cb e" style="left:57px;top:672px;width:13px;height:13px;"></div>
<svg style="left:75px;top:668px" width="22" height="22"><use href="#film"/></svg>
<span class="m" style="left:104px;top:672px;">464 (0x01D0)</span>
<span class="m" style="right:795px;top:672px;">  0.0 %   0.004 Mb/s</span>
<span class="m" style="left:376px;top:672px;">PMap PMT</span>
<div class="dh" style="left:44px;top:700px;width:11px;height:1px;"></div>
<div class="cb e" style="left:57px;top:694px;width:13px;height:13px;"></div>
<svg style="left:75px;top:690px" width="22" height="22"><use href="#film"/></svg>
<span class="m" style="left:104px;top:694px;">480 (0x01E0)</span>
<span class="m" style="right:795px;top:694px;">  0.0 %   0.004 Mb/s</span>
<span class="m" style="left:376px;top:694px;">PMap PMT</span></div>
<div class="sbv" style="left:480px;top:337px;width:16px;height:368px;"></div>
<div class="thv" style="left:480px;top:356px;width:15px;height:156px;"></div>
<div style="left:485px;top:430px;width:7px;height:1px;background:#505050;box-shadow:0 1px 0 #fff"></div>
<div style="left:485px;top:433px;width:7px;height:1px;background:#505050;box-shadow:0 1px 0 #fff"></div>
<div style="left:485px;top:436px;width:7px;height:1px;background:#505050;box-shadow:0 1px 0 #fff"></div>
<svg style="left:484px;top:344px" width="8" height="5"><path d="M.5 4.5h7L4 .5Z" fill="#303030"/></svg>
<svg style="left:484px;top:694px" width="8" height="5"><path d="M.5 .5h7L4 4.5Z" fill="#303030"/></svg>
<div class="sbh" style="left:16px;top:705px;width:464px;height:16px;"></div>
<div class="thh" style="left:34px;top:706px;width:357px;height:15px;"></div>
<div style="left:208px;top:710px;width:1px;height:7px;background:#505050;box-shadow:1px 0 0 #fff"></div>
<div style="left:211px;top:710px;width:1px;height:7px;background:#505050;box-shadow:1px 0 0 #fff"></div>
<div style="left:214px;top:710px;width:1px;height:7px;background:#505050;box-shadow:1px 0 0 #fff"></div>
<svg style="left:22px;top:709px" width="5" height="8"><path d="M4.5 .5v7L.5 4Z" fill="#303030"/></svg>
<svg style="left:469px;top:709px" width="5" height="8"><path d="M.5 .5v7l4-3.5Z" fill="#303030"/></svg>
<div style="left:480px;top:705px;width:16px;height:17px;background:#f0f0f0"></div>
<div style="left:496px;top:321px;width:4px;height:16px;background:#f0f0f0"></div>
<div style="left:496px;top:321px;width:1px;height:401px;background:#e3e3e3"></div>
<div style="left:497px;top:320px;width:1px;height:403px;background:#fff"></div>
<div style="left:498px;top:55px;width:1px;height:670px;background:#a0a0a0"></div>
<div style="left:499px;top:53px;width:5px;height:672px;background:#fafafa"></div>
<div style="left:503px;top:76px;width:642px;height:615px;border:1px solid;border-color:#fff #696969 #696969 #fff;box-shadow:inset -1px -1px 0 #a0a0a0"></div>
<div style="left:504px;top:56px;width:70px;height:22px;background:#f0f0f0;border-left:1px solid #fff;border-top:1px solid #fff"></div>
<div class="sep" style="left:573px;top:57px;width:2px;height:20px;"></div>
<span class="t" style="left:510.5px;top:59.5px;">Allocation</span>
<span class="t" style="left:578px;top:61px;">Trend</span>
<div class="sep" style="left:619px;top:59px;width:2px;height:17px;"></div>
<div style="left:511px;top:85px;width:111px;height:27px;border:1px solid #a8a8a8;box-shadow:1px 1px 0 #fff, inset 1px 1px 0 #fff"></div>
<span class="t" style="left:518px;top:80px;background:#f0f0f0;padding:0 1px">Stream data rate</span>
<span class="t" style="left:525px;top:96px;">30.81 Mb/s</span>
<span class="ar" style="left:797px;top:92px;font-size:11px">Services: 9</span>
<svg style="left:505px;top:78px" width="638" height="612" viewBox="505 78 638 612" shape-rendering="crispEdges"><polygon points="597.5,366.0 597.5,369.0 597.6,372.1 597.8,375.1 598.1,378.1 598.4,381.1 598.7,384.2 599.2,387.2 599.7,390.2 600.3,393.2 601.0,396.2 601.7,399.1 602.5,402.1 603.3,405.1 604.3,408.0 605.3,411.0 606.3,413.9 607.4,416.8 608.6,419.7 609.9,422.5 611.2,425.4 612.6,428.2 614.1,431.1 615.6,433.9 617.2,436.6 618.8,439.4 620.5,442.1 622.3,444.8 624.1,447.5 626.0,450.2 628.0,452.8 630.0,455.4 632.1,458.0 634.2,460.6 636.4,463.1 636.4,476.1 634.2,473.6 632.1,471.0 630.0,468.4 628.0,465.8 626.0,463.2 624.1,460.5 622.3,457.8 620.5,455.1 618.8,452.4 617.2,449.6 615.6,446.9 614.1,444.1 612.6,441.2 611.2,438.4 609.9,435.5 608.6,432.7 607.4,429.8 606.3,426.9 605.3,424.0 604.3,421.0 603.3,418.1 602.5,415.1 601.7,412.1 601.0,409.2 600.3,406.2 599.7,403.2 599.2,400.2 598.7,397.2 598.4,394.1 598.1,391.1 597.8,388.1 597.6,385.1 597.5,382.0 597.5,379.0" fill="#0000d2" stroke="#3c0038" stroke-width="1"/><polygon points="636.4,463.1 638.7,465.6 641.0,468.1 643.3,470.6 645.8,473.0 648.3,475.4 650.8,477.7 653.4,480.0 656.0,482.3 658.7,484.5 661.5,486.7 664.3,488.9 667.1,491.1 670.0,493.1 673.0,495.2 676.0,497.2 679.0,499.2 682.1,501.1 685.2,503.0 688.4,504.9 691.6,506.7 694.9,508.4 698.2,510.1 701.5,511.8 704.9,513.5 708.3,515.0 711.7,516.6 715.2,518.1 718.7,519.5 722.3,520.9 725.8,522.3 729.4,523.6 733.1,524.8 736.7,526.0 740.4,527.2 744.1,528.3 747.9,529.3 751.7,530.3 755.4,531.3 759.3,532.2 763.1,533.0 766.9,533.8 770.8,534.6 774.7,535.3 778.6,535.9 782.5,536.5 786.4,537.0 790.4,537.5 794.3,538.0 798.3,538.3 802.2,538.7 806.2,538.9 810.2,539.2 814.2,539.3 818.1,539.4 822.1,539.5 826.1,539.5 830.1,539.4 834.1,539.3 838.1,539.2 842.1,539.0 846.0,538.7 850.0,538.4 854.0,538.0 857.9,537.6 861.8,537.1 865.8,536.6 869.7,536.0 873.6,535.4 877.5,534.7 881.3,534.0 885.2,533.2 889.0,532.3 892.8,531.5 896.6,530.5 900.4,529.5 904.2,528.5 907.9,527.4 911.6,526.2 915.2,525.0 918.9,523.8 922.5,522.5 926.1,521.2 929.6,519.8 933.1,518.3 936.6,516.9 940.1,515.3 943.5,513.8 946.9,512.1 950.2,510.5 953.5,508.8 956.8,507.0 960.0,505.2 963.2,503.4 966.3,501.5 969.4,499.6 972.4,497.6 975.5,495.6 978.4,493.5 981.3,491.4 984.2,489.3 987.0,487.2 989.7,485.0 992.5,482.7 995.1,480.4 997.7,478.1 1000.3,475.8 1002.8,473.4 1005.2,471.0 1007.6,468.6 1009.9,466.1 1012.2,463.6 1014.4,461.1 1016.6,458.5 1018.7,455.9 1020.7,453.3 1022.7,450.6 1024.6,448.0 1026.4,445.3 1028.2,442.5 1030.0,439.8 1031.6,437.0 1033.2,434.2 1034.8,431.4 1036.2,428.6 1037.6,425.7 1039.0,422.8 1040.2,420.0 1041.4,417.1 1042.6,414.1 1043.7,411.2 1044.7,408.2 1045.6,405.3 1046.5,402.3 1047.3,399.3 1048.0,396.3 1048.7,393.3 1049.3,390.3 1049.8,387.3 1050.2,384.3 1050.6,381.2 1050.9,378.2 1051.2,375.1 1051.4,372.1 1051.5,369.0 1051.5,366.0 1051.5,379.0 1051.5,382.0 1051.4,385.1 1051.2,388.1 1050.9,391.2 1050.6,394.2 1050.2,397.3 1049.8,400.3 1049.3,403.3 1048.7,406.3 1048.0,409.3 1047.3,412.3 1046.5,415.3 1045.6,418.3 1044.7,421.2 1043.7,424.2 1042.6,427.1 1041.4,430.1 1040.2,433.0 1039.0,435.8 1037.6,438.7 1036.2,441.6 1034.8,444.4 1033.2,447.2 1031.6,450.0 1030.0,452.8 1028.2,455.5 1026.4,458.3 1024.6,461.0 1022.7,463.6 1020.7,466.3 1018.7,468.9 1016.6,471.5 1014.4,474.1 1012.2,476.6 1009.9,479.1 1007.6,481.6 1005.2,484.0 1002.8,486.4 1000.3,488.8 997.7,491.1 995.1,493.4 992.5,495.7 989.7,498.0 987.0,500.2 984.2,502.3 981.3,504.4 978.4,506.5 975.5,508.6 972.4,510.6 969.4,512.6 966.3,514.5 963.2,516.4 960.0,518.2 956.8,520.0 953.5,521.8 950.2,523.5 946.9,525.1 943.5,526.8 940.1,528.3 936.6,529.9 933.1,531.3 929.6,532.8 926.1,534.2 922.5,535.5 918.9,536.8 915.2,538.0 911.6,539.2 907.9,540.4 904.2,541.5 900.4,542.5 896.6,543.5 892.8,544.5 889.0,545.3 885.2,546.2 881.3,547.0 877.5,547.7 873.6,548.4 869.7,549.0 865.8,549.6 861.8,550.1 857.9,550.6 854.0,551.0 850.0,551.4 846.0,551.7 842.1,552.0 838.1,552.2 834.1,552.3 830.1,552.4 826.1,552.5 822.1,552.5 818.1,552.4 814.2,552.3 810.2,552.2 806.2,551.9 802.2,551.7 798.3,551.3 794.3,551.0 790.4,550.5 786.4,550.0 782.5,549.5 778.6,548.9 774.7,548.3 770.8,547.6 766.9,546.8 763.1,546.0 759.3,545.2 755.4,544.3 751.7,543.3 747.9,542.3 744.1,541.3 740.4,540.2 736.7,539.0 733.1,537.8 729.4,536.6 725.8,535.3 722.3,533.9 718.7,532.5 715.2,531.1 711.7,529.6 708.3,528.0 704.9,526.5 701.5,524.8 698.2,523.1 694.9,521.4 691.6,519.7 688.4,517.9 685.2,516.0 682.1,514.1 679.0,512.2 676.0,510.2 673.0,508.2 670.0,506.1 667.1,504.1 664.3,501.9 661.5,499.7 658.7,497.5 656.0,495.3 653.4,493.0 650.8,490.7 648.3,488.4 645.8,486.0 643.3,483.6 641.0,481.1 638.7,478.6 636.4,476.1" fill="#86a8d0" stroke="#3c0038" stroke-width="1"/><polygon points="824.5,366.0 1051.5,366.0 1051.5,363.0 1051.4,359.9 1051.2,356.9 1050.9,353.8 1050.6,350.8 1050.2,347.8 1049.8,344.7 1049.3,341.7 1048.7,338.7 1048.0,335.7 1047.3,332.7 1046.5,329.7 1045.6,326.7 1044.7,323.8 1043.7,320.8 1042.6,317.9 1041.5,315.0 1040.3,312.1 1039.0,309.2" fill="#ffff00" stroke="#3c0038" stroke-width="1"/><polygon points="824.5,366.0 1039.0,309.2 1037.6,306.3 1036.2,303.5 1034.8,300.6 1033.3,297.8 1031.7,295.1 1030.0,292.3 1028.3,289.6 1026.5,286.8 1024.7,284.1 1022.7,281.5 1020.8,278.8 1018.7,276.2 1016.7,273.6 1014.5,271.1 1012.3,268.5 1010.0,266.0 1007.7,263.6 1005.4,261.1 1002.9,258.7 1000.4,256.4 997.9,254.0 995.3,251.7 992.7,249.5 990.0,247.2 987.2,245.0 984.4,242.9 981.6,240.7 978.7,238.7 975.7,236.6 972.7,234.6 969.7,232.6" fill="#ff8000" stroke="#3c0038" stroke-width="1"/><polygon points="824.5,366.0 969.7,232.6 966.5,230.7 963.3,228.7 960.1,226.8 956.8,225.0 953.4,223.2 950.1,221.5 946.6,219.8 943.2,218.1 939.7,216.5 936.1,214.9 932.6,213.4 929.0,212.0 925.3,210.6 921.6,209.2 917.9,207.9 914.2,206.6 910.4,205.4 906.6,204.3 902.8,203.2 899.0,202.1 895.1,201.1 891.2,200.2 887.3,199.3 883.4,198.4 879.4,197.7 875.4,196.9 871.4,196.3" fill="#ff00ff" stroke="#3c0038" stroke-width="1"/><polygon points="824.5,366.0 871.4,196.3 867.5,195.6 863.5,195.1 859.6,194.6 855.6,194.1 851.6,193.7 847.6,193.4 843.6,193.1 839.6,192.9 835.6,192.7 831.6,192.6 827.5,192.5 823.5,192.5 819.5,192.5 815.5,192.6 811.5,192.8 807.5,193.0 803.4,193.2 799.4,193.6 795.5,193.9 791.5,194.3 787.5,194.8 783.5,195.3 779.6,195.9 775.6,196.6 771.7,197.3 767.8,198.0 763.9,198.8 760.1,199.6 756.2,200.5 752.4,201.5 748.6,202.5 744.8,203.5 741.1,204.6" fill="#00ff00" stroke="#3c0038" stroke-width="1"/><polygon points="824.5,366.0 741.1,204.6 737.3,205.8 733.5,207.0 729.8,208.3 726.1,209.7 722.4,211.0 718.8,212.5 715.2,213.9 711.6,215.5 708.1,217.0 704.6,218.7 701.2,220.3 697.7,222.1 694.4,223.8 691.0,225.7 687.8,227.5 684.5,229.4 681.3,231.4 678.2,233.4 675.1,235.4 672.0,237.5 669.0,239.6 666.1,241.7 663.2,244.0" fill="#00ffff" stroke="#3c0038" stroke-width="1"/><polygon points="824.5,366.0 663.2,244.0 660.3,246.2 657.4,248.5 654.6,250.9 651.9,253.3 649.2,255.7 646.6,258.2 644.1,260.7 641.6,263.2 639.2,265.8 636.8,268.4 634.5,271.1 632.3,273.7 630.1,276.4 628.0,279.2 625.9,281.9 623.9,284.7 622.0,287.6 620.2,290.4 618.4,293.3" fill="#000080" stroke="#3c0038" stroke-width="1"/><polygon points="824.5,366.0 618.4,293.3 616.8,296.0 615.2,298.8 613.7,301.6 612.3,304.4 610.9,307.3 609.6,310.1 608.3,313.0 607.2,315.9 606.1,318.8 605.0,321.7 604.0,324.7 603.1,327.6 602.3,330.6 601.5,333.6 600.8,336.5 600.2,339.5 599.6,342.5 599.1,345.5 598.7,348.5 598.3,351.6 598.0,354.6" fill="#008000" stroke="#3c0038" stroke-width="1"/><polygon points="824.5,366.0 598.0,354.6 597.8,357.7 597.6,360.8 597.5,363.9 597.5,366.9 597.6,370.0 597.7,373.1 597.9,376.2 598.2,379.3 598.5,382.4 598.9,385.5 599.4,388.5 600.0,391.6 600.6,394.7 601.3,397.7 602.1,400.8 602.9,403.8 603.9,406.8 604.9,409.8 605.9,412.8 607.0,415.8 608.2,418.7 609.5,421.6 610.8,424.6 612.2,427.5 613.7,430.4 615.2,433.2 616.8,436.1 618.5,438.9 620.2,441.7 622.0,444.5 623.9,447.2 625.8,449.9 627.8,452.6 629.9,455.3 632.0,457.9 634.2,460.5 636.4,463.1" fill="#0000ff" stroke="#3c0038" stroke-width="1"/><polygon points="824.5,366.0 636.4,463.1 638.7,465.6 641.0,468.1 643.3,470.6 645.8,473.0 648.3,475.4 650.8,477.7 653.4,480.0 656.0,482.3 658.7,484.5 661.5,486.7 664.3,488.9 667.1,491.1 670.0,493.1 673.0,495.2 676.0,497.2 679.0,499.2 682.1,501.1 685.2,503.0 688.4,504.9 691.6,506.7 694.9,508.4 698.2,510.1 701.5,511.8 704.9,513.5 708.3,515.0 711.7,516.6 715.2,518.1 718.7,519.5 722.3,520.9 725.8,522.3 729.4,523.6 733.1,524.8 736.7,526.0 740.4,527.2 744.1,528.3 747.9,529.3 751.7,530.3 755.4,531.3 759.3,532.2 763.1,533.0 766.9,533.8 770.8,534.6 774.7,535.3 778.6,535.9 782.5,536.5 786.4,537.0 790.4,537.5 794.3,538.0 798.3,538.3 802.2,538.7 806.2,538.9 810.2,539.2 814.2,539.3 818.1,539.4 822.1,539.5 826.1,539.5 830.1,539.4 834.1,539.3 838.1,539.2 842.1,539.0 846.0,538.7 850.0,538.4 854.0,538.0 857.9,537.6 861.8,537.1 865.8,536.6 869.7,536.0 873.6,535.4 877.5,534.7 881.3,534.0 885.2,533.2 889.0,532.3 892.8,531.5 896.6,530.5 900.4,529.5 904.2,528.5 907.9,527.4 911.6,526.2 915.2,525.0 918.9,523.8 922.5,522.5 926.1,521.2 929.6,519.8 933.1,518.3 936.6,516.9 940.1,515.3 943.5,513.8 946.9,512.1 950.2,510.5 953.5,508.8 956.8,507.0 960.0,505.2 963.2,503.4 966.3,501.5 969.4,499.6 972.4,497.6 975.5,495.6 978.4,493.5 981.3,491.4 984.2,489.3 987.0,487.2 989.7,485.0 992.5,482.7 995.1,480.4 997.7,478.1 1000.3,475.8 1002.8,473.4 1005.2,471.0 1007.6,468.6 1009.9,466.1 1012.2,463.6 1014.4,461.1 1016.6,458.5 1018.7,455.9 1020.7,453.3 1022.7,450.6 1024.6,448.0 1026.4,445.3 1028.2,442.5 1030.0,439.8 1031.6,437.0 1033.2,434.2 1034.8,431.4 1036.2,428.6 1037.6,425.7 1039.0,422.8 1040.2,420.0 1041.4,417.1 1042.6,414.1 1043.7,411.2 1044.7,408.2 1045.6,405.3 1046.5,402.3 1047.3,399.3 1048.0,396.3 1048.7,393.3 1049.3,390.3 1049.8,387.3 1050.2,384.3 1050.6,381.2 1050.9,378.2 1051.2,375.1 1051.4,372.1 1051.5,369.0 1051.5,366.0" fill="#a6caf0" stroke="#3c0038" stroke-width="1"/><line x1="1051.5" y1="366.0" x2="1061" y2="366" stroke="#fff" stroke-width="1"/><line x1="1048.3" y1="337.2" x2="1058" y2="335" stroke="#fff" stroke-width="1"/><line x1="1011.2" y1="267.3" x2="1019" y2="262" stroke="#fff" stroke-width="1"/><line x1="923.5" y1="209.9" x2="927" y2="201" stroke="#fff" stroke-width="1"/><line x1="805.4" y1="193.1" x2="804" y2="183" stroke="#fff" stroke-width="1"/><line x1="699.4" y1="221.2" x2="693" y2="213" stroke="#fff" stroke-width="1"/><line x1="638.0" y1="267.1" x2="629" y2="261" stroke="#fff" stroke-width="1"/><line x1="604.5" y1="323.2" x2="594" y2="320" stroke="#fff" stroke-width="1"/><line x1="605.4" y1="411.3" x2="595" y2="414" stroke="#fff" stroke-width="1"/><line x1="890.9" y1="531.9" x2="893" y2="541" stroke="#fff" stroke-width="1"/></svg>
<div class="lb" style="left:1061px;top:350px;width:65px;height:16px;font-size:10.9px;line-height:14px;padding-right:1px">0.000 Mb/s</div>
<div class="lb" style="left:1058px;top:319px;width:65px;height:16px;font-size:10.9px;line-height:14px;padding-right:1px">1.636 Mb/s</div>
<div class="lb" style="left:1019px;top:246px;width:65px;height:16px;font-size:10.9px;line-height:14px;padding-right:1px">2.663 Mb/s</div>
<div class="lb" style="left:927px;top:185px;width:65px;height:16px;font-size:10.9px;line-height:14px;padding-right:1px">2.382 Mb/s</div>
<div class="lb" style="left:739px;top:167px;width:65px;height:16px;font-size:10.9px;line-height:14px;padding-right:1px">2.867 Mb/s</div>
<div class="lb" style="left:628px;top:197px;width:65px;height:16px;font-size:10.9px;line-height:14px;padding-right:1px">2.031 Mb/s</div>
<div class="lb" style="left:564px;top:245px;width:65px;height:16px;font-size:10.9px;line-height:14px;padding-right:1px">1.705 Mb/s</div>
<div class="lb" style="left:529px;top:304px;width:65px;height:16px;font-size:10.9px;line-height:14px;padding-right:1px">1.798 Mb/s</div>
<div class="lb" style="left:530px;top:414px;width:65px;height:16px;font-size:10.9px;line-height:14px;padding-right:1px">3.236 Mb/s</div>
<div class="lb" style="left:893px;top:541px;width:71px;height:16px;font-size:10.9px;line-height:14px;padding-right:1px">12.492 Mb/s</div>
<div style="left:571px;top:653px;width:528px;height:32px;background:#fff;border:1px solid #000;box-shadow:1px 1px 0 #000"></div>
<div style="left:576px;top:657px;width:14px;height:9px;background:#ff0000;border:1px solid #000"></div>
<span class="ar" style="left:594px;top:655px;font-size:10.8px">&lt;unknown&gt;</span>
<div style="left:662px;top:657px;width:14px;height:9px;background:#ffff00;border:1px solid #000"></div>
<span class="ar" style="left:680px;top:655px;font-size:10.8px">ZOOM</span>
<div style="left:748px;top:657px;width:14px;height:9px;background:#ff8000;border:1px solid #000"></div>
<span class="ar" style="left:766px;top:655px;font-size:10.8px">Індиго</span>
<div style="left:834px;top:657px;width:14px;height:9px;background:#ff00ff;border:1px solid #000"></div>
<span class="ar" style="left:852px;top:655px;font-size:10.8px">СТБ</span>
<div style="left:920px;top:657px;width:14px;height:9px;background:#00ff00;border:1px solid #000"></div>
<span class="ar" style="left:938px;top:655px;font-size:10.8px">ТЕТ</span>
<div style="left:1006px;top:657px;width:14px;height:9px;background:#00ffff;border:1px solid #000"></div>
<span class="ar" style="left:1024px;top:655px;font-size:10.8px">К-2</span>
<div style="left:576px;top:672px;width:14px;height:9px;background:#000080;border:1px solid #000"></div>
<span class="ar" style="left:594px;top:669px;font-size:10.8px">Новий канал</span>
<div style="left:662px;top:672px;width:14px;height:9px;background:#008000;border:1px solid #000"></div>
<span class="ar" style="left:680px;top:669px;font-size:10.8px">М-1</span>
<div style="left:748px;top:672px;width:14px;height:9px;background:#0000ff;border:1px solid #000"></div>
<span class="ar" style="left:766px;top:669px;font-size:10.8px">ПРЯМИЙ</span>
<div style="left:834px;top:672px;width:14px;height:9px;background:#a6caf0;border:1px solid #000"></div>
<span class="ar" style="left:852px;top:669px;font-size:10.8px">stuffing</span>
<div style="left:503px;top:691px;width:642px;height:32px;border:1px solid;border-color:transparent #696969 #696969 #fff;box-shadow:inset -1px -1px 0 #a0a0a0"></div>
<div class="sep" style="left:572px;top:695px;width:2px;height:20px;"></div>
<span class="t" style="left:511px;top:697px;">Allocation</span>
<span class="t" style="left:578px;top:699px;">Trend</span>
<div class="sep" style="left:618px;top:697px;width:2px;height:17px;"></div>
<div style="left:9px;top:726px;width:1141px;height:2px;background:#696969;border-top:1px solid #a0a0a0"></div>
<svg style="left:556px;top:727px" width="48" height="8" viewBox="556 727 48 8" shape-rendering="crispEdges"><polygon points="559.5,729.5 600.5,729.5 595.5,732.5 564.5,732.5" fill="#c8c8c8" stroke="#000" stroke-width="1"/><polygon points="559,729 562,729 564,731 562,731" fill="#000"/><polygon points="601,729 598,729 596,731 598,731" fill="#000"/></svg>
<div style="left:14px;top:736px;width:706px;height:19px;background:#fff;border:1px solid;border-color:#696969 #e3e3e3 #e3e3e3 #696969;box-shadow:-1px -1px 0 #a0a0a0"></div>
<div style="left:10px;top:757px;width:711px;height:1px;background:#dcdcdc"></div>
<div class="fld" style="left:15px;top:758px;width:141px;height:16px;"></div>
<span class="t" style="left:17.4px;top:759.6px;font-size:11.3px">16.08.2021 13:50:18</span>
<span class="t" style="left:171.2px;top:759.7px;">SW</span>
<div class="fld" style="left:195px;top:758px;width:74px;height:16px;"></div>
<span class="t" style="left:197.4px;top:759.6px;font-size:11.3px">0.9.65.1099</span>
<span class="t" style="left:271.2px;top:759.7px;">IP</span>
<div class="fld" style="left:287px;top:758px;width:433px;height:16px;"></div>
<span class="t" style="left:289.4px;top:759.6px;font-size:11.3px">192.168.1.100</span>
<span class="t" style="left:17.2px;top:779.7px;word-spacing:2.5px">TS ID</span>
<div class="fld" style="left:55px;top:778px;width:101px;height:16px;"></div>
<span class="t" style="left:57.4px;top:779.6px;font-size:11.3px">200 (0x00C8)</span>
<span class="t" style="left:164.2px;top:779.7px;">PIDs</span>
<div class="fld" style="left:195px;top:778px;width:33px;height:16px;"></div>
<span class="t" style="left:197.4px;top:779.6px;font-size:11.3px">34</span>
<span class="t" style="left:233.7px;top:779.7px;">Services</span>
<div class="fld" style="left:287px;top:778px;width:27px;height:16px;"></div>
<span class="t" style="left:289.4px;top:779.6px;font-size:11.3px">9</span>
<div class="fld" style="left:317px;top:778px;width:403px;height:16px;overflow:hidden"></div>
<span class="t" style="left:319.4px;top:779.6px;font-size:11.55px">"&lt;unknown&gt;", "ZOOM", "²íäèãî", "ÑÒÁ", "TET", "K-2", "Íîâèé êàíàë", "</span>
<div style="left:10px;top:796px;width:146px;height:18px;background:#a6caf0"></div>
<div style="left:157px;top:796px;width:71px;height:18px;background:#a6caf0"></div>
<div style="left:229px;top:796px;width:492px;height:18px;background:#a6caf0"></div>
<div class="fld" style="left:15px;top:797px;width:141px;height:16px;background:#a6caf0"></div>
<span class="t" style="left:165.2px;top:798.7px;">Prio.</span>
<div class="fld" style="left:195px;top:797px;width:33px;height:16px;background:#a6caf0"></div>
<div class="fld" style="left:235px;top:797px;width:485px;height:16px;background:#a6caf0"></div>
<span class="t" style="left:17.2px;top:817.7px;letter-spacing:-.25px">License</span>
<div class="fld" style="left:61px;top:816px;width:55px;height:16px;"></div>
<span class="t" style="left:84.9px;top:817.6px;font-size:11.3px">H</span>
<span class="t" style="left:123.2px;top:817.7px;">Input</span>
<div class="fld" style="left:157px;top:816px;width:563px;height:16px;"></div>
<span class="t" style="left:159.4px;top:817.6px;font-size:11.3px">"Digital TV" 746000 kHz, Bandwidth 8 MHz</span>
<div style="left:720px;top:735px;width:1px;height:100px;background:#fff"></div>
<div style="left:725px;top:735px;width:425px;height:98px;background:#000"></div>
<svg style="left:725px;top:735px" width="425" height="98" viewBox="725 735 425 98" shape-rendering="crispEdges"><line x1="762" y1="760.5" x2="1145" y2="760.5" stroke="#9c9c9c" stroke-width="1" stroke-dasharray="3,3"/><line x1="759" y1="760.5" x2="762" y2="760.5" stroke="#d0d0d0" stroke-width="1"/><line x1="762" y1="773.5" x2="1145" y2="773.5" stroke="#9c9c9c" stroke-width="1" stroke-dasharray="3,3"/><line x1="759" y1="773.5" x2="762" y2="773.5" stroke="#d0d0d0" stroke-width="1"/><line x1="762" y1="787.5" x2="1145" y2="787.5" stroke="#9c9c9c" stroke-width="1" stroke-dasharray="3,3"/><line x1="759" y1="787.5" x2="762" y2="787.5" stroke="#d0d0d0" stroke-width="1"/><line x1="762" y1="800.5" x2="1145" y2="800.5" stroke="#9c9c9c" stroke-width="1" stroke-dasharray="3,3"/><line x1="759" y1="800.5" x2="762" y2="800.5" stroke="#d0d0d0" stroke-width="1"/><line x1="762" y1="814.5" x2="1145" y2="814.5" stroke="#9c9c9c" stroke-width="1" stroke-dasharray="3,3"/><line x1="759" y1="814.5" x2="762" y2="814.5" stroke="#d0d0d0" stroke-width="1"/><line x1="762" y1="828.5" x2="1145" y2="828.5" stroke="#9c9c9c" stroke-width="1" stroke-dasharray="3,3"/><line x1="759" y1="828.5" x2="762" y2="828.5" stroke="#d0d0d0" stroke-width="1"/><line x1="761.5" y1="760" x2="761.5" y2="829" stroke="#c8c8c8" stroke-width="1" stroke-dasharray="1,2"/><polyline points="910.0,828.0 911.0,824.2 913.5,812.9 914.0,813.3 919.0,813.1 923.0,813.9 927.0,813.2 931.0,811.9 936.0,814.0 943.0,813.1 948.0,813.9 955.0,814.0 959.0,811.8 963.0,812.7 970.0,814.0 975.0,814.0 980.0,813.4 985.0,812.8 991.0,812.7 996.0,813.9 1001.0,813.2 1005.0,812.7 1010.0,812.9 1017.0,812.2 1024.0,812.7 1031.0,813.2 1036.0,812.2 1041.0,813.9 1047.0,812.8 1053.0,812.3 1059.0,812.6 1063.0,813.8 1070.0,813.7 1076.0,813.7 1083.0,813.1 1087.0,812.2 1093.0,813.3 1099.0,812.7 1106.0,813.9 1110.0,811.8 1117.0,812.4 1121.0,814.0 1127.0,812.5 1134.0,813.4 1141.0,811.9 1145.0,812.9" fill="none" stroke="#7878e8" stroke-width="1"/><polyline points="910.0,828.0 911.0,821.3 913.5,801.4 914.0,802.5 921.0,801.7 925.0,801.4 930.0,800.7 935.0,800.8 942.0,801.6 949.0,802.4 956.0,801.6 962.0,800.4 969.0,800.5 975.0,800.9 981.0,800.9 988.0,800.2 993.0,802.4 998.0,802.0 1003.0,802.6 1008.0,801.9 1012.0,802.2 1018.0,801.1 1024.0,800.3 1028.0,801.5 1035.0,801.6 1042.0,802.3 1049.0,802.4 1053.0,800.2 1060.0,802.2 1066.0,801.1 1070.0,802.6 1075.0,801.3 1081.0,801.1 1085.0,800.4 1092.0,802.2 1098.0,800.2 1104.0,801.4 1108.0,800.5 1115.0,801.4 1121.0,802.4 1125.0,800.8 1131.0,801.4 1136.0,801.3 1141.0,800.3 1145.0,801.4" fill="none" stroke="#ff0000" stroke-width="1"/><polyline points="910.0,828.0 911.0,817.6 913.5,786.3 914.0,786.3 918.0,786.3 924.0,786.3 928.0,786.3 934.0,786.3 939.0,786.3 944.0,786.3 950.0,786.3 955.0,786.3 962.0,786.3 967.0,786.3 974.0,786.3 978.0,786.3 984.0,786.3 989.0,786.3 995.0,786.3 1001.0,786.3 1007.0,786.3 1011.0,786.3 1016.0,786.3 1023.0,786.3 1027.0,786.3 1033.0,786.3 1037.0,786.3 1041.0,786.3 1046.0,786.3 1051.0,786.3 1057.0,786.3 1064.0,786.3 1068.0,786.3 1073.0,786.3 1077.0,786.3 1084.0,786.3 1089.0,786.3 1096.0,786.3 1102.0,786.3 1107.0,786.3 1111.0,786.3 1116.0,786.3 1121.0,786.3 1126.0,786.3 1131.0,786.3 1136.0,786.3 1142.0,786.3 1145.0,786.3" fill="none" stroke="#00ff00" stroke-width="1"/></svg>
<span class="ar" style="left:733px;top:740px;color:#00ff00;font-size:10.8px">Stream data rate</span>
<span class="ar" style="right:402.5px;top:753.5px;color:#00ff00;font-size:10.8px">50</span>
<span class="ar" style="right:402.5px;top:766.5px;color:#00ff00;font-size:10.8px">40</span>
<span class="ar" style="right:402.5px;top:780.5px;color:#00ff00;font-size:10.8px">30</span>
<span class="ar" style="right:402.5px;top:793.5px;color:#00ff00;font-size:10.8px">20</span>
<span class="ar" style="right:402.5px;top:807.5px;color:#00ff00;font-size:10.8px">10</span>
<span class="ar" style="right:402.5px;top:821.5px;color:#00ff00;font-size:10.8px">0</span>
<span class="ar" style="left:729.5px;top:806.5px;color:#00ff00;font-size:10.8px;transform:rotate(-90deg);transform-origin:0 0;width:30px">Mb/s</span>
<div style="left:884px;top:743px;width:211px;height:46px;background:#000080;border:1px solid #f0f0f0"></div>
<div style="left:889px;top:752px;width:10px;height:1px;background:#00ff00"></div>
<span class="t" style="left:903px;top:745.7px;font-family:&quot;Liberation Mono&quot;,monospace;font-size:11.67px;color:#fff;letter-spacing:0">Stream   30.81 Mb/s</span>
<div style="left:889px;top:766px;width:10px;height:1px;background:#ff0000"></div>
<span class="t" style="left:903px;top:759.7px;font-family:&quot;Liberation Mono&quot;,monospace;font-size:11.67px;color:#fff;letter-spacing:0">Payload  19.66 Mb/s  63.8 %</span>
<div style="left:889px;top:780px;width:10px;height:1px;background:#7878e8"></div>
<span class="t" style="left:903px;top:773.7px;font-family:&quot;Liberation Mono&quot;,monospace;font-size:11.67px;color:#fff;letter-spacing:0">Stuffing 11.15 Mb/s  36.2 %</span>
<div style="left:885px;top:760px;width:209px;height:1px;background-image:linear-gradient(90deg,#9c9c9c 50%,transparent 50%);background-size:6px 1px;opacity:.9"></div>
<div style="left:885px;top:773px;width:209px;height:1px;background-image:linear-gradient(90deg,#9c9c9c 50%,transparent 50%);background-size:6px 1px;opacity:.9"></div>
<div style="left:885px;top:787px;width:209px;height:1px;background-image:linear-gradient(90deg,#9c9c9c 50%,transparent 50%);background-size:6px 1px;opacity:.9"></div>
<div style="left:1127px;top:737px;width:21px;height:21px;background:#f4f4f4;border:1px solid #c8c8c8"></div>
<svg style="left:1128px;top:738px" width="19" height="19" viewBox="0 0 19 19"><path d="M9 11l-6.5 6.5" stroke="#c88a3a" stroke-width="2.6" stroke-linecap="round"/><circle cx="12" cy="7" r="5.2" fill="#dfeaff" stroke="#8a9ab8" stroke-width="1.3"/><path d="M9 7h6" stroke="#1030c0" stroke-width="2"/></svg>
<div style="left:9px;top:833px;width:716px;height:2px;background:#a0a0a0"></div>
<div style="left:725px;top:833px;width:425px;height:1px;background:#fff"></div>
<span class="t" style="left:14.2px;top:839.5px;">Status</span>
<div style="left:55px;top:838px;width:84px;height:15px;background:#00ff00;border:1px solid #000"></div>
<span class="t" style="left:57.2px;top:839.5px;">Synch'd DVB</span>
<span class="t" style="left:150.2px;top:839.5px;">Input data rate</span>
<div class="fld" style="left:241px;top:838px;width:48px;height:16px;"></div>
<span class="t" style="right:871.5px;top:839.5px;font-size:11.2px">30.84</span>
<span class="t" style="left:293.7px;top:839.5px;">Mb/s</span>
<span class="t" style="left:329.7px;top:839.5px;">Stream data rate</span>
<div class="fld" style="left:432px;top:838px;width:48px;height:16px;"></div>
<span class="t" style="right:680.5px;top:839.5px;font-size:11.2px">30.81</span>
<span class="t" style="left:485.7px;top:839.5px;">Mb/s</span>
<span class="t" style="left:519.7px;top:839.5px;">Packets</span>
<div class="fld" style="left:568px;top:838px;width:53px;height:16px;"></div>
<span class="ar" style="left:572px;top:838px;font-size:10px;transform:scaleX(.82);transform-origin:0 0;line-height:12px">188/188</span>
<div style="left:572px;top:850px;width:45px;height:2px;background:#a0a0a0"></div>
<div style="left:572px;top:850px;width:32px;height:2px;background:#00c000"></div>
<span class="t" style="left:932.7px;top:839.5px;">Priority:</span>
<div style="left:984px;top:838px;width:16px;height:15px;background:#808080;border:1px solid #000"></div>
<span class="t" style="left:985.7px;top:839.5px;">1.</span>
<div style="left:1004px;top:838px;width:16px;height:15px;background:#808080;border:1px solid #000"></div>
<span class="t" style="left:1005.7px;top:839.5px;">2.</span>
<div style="left:1024px;top:838px;width:16px;height:15px;background:#00ff00;border:1px solid #000"></div>
<span class="t" style="left:1025.7px;top:839.5px;">3.</span>
<div style="left:1044px;top:838px;width:16px;height:15px;background:#808080;border:1px solid #000"></div>
<span class="t" style="left:1045.7px;top:839.5px;">A.</span>
<div style="left:1064px;top:838px;width:16px;height:15px;background:#808080;border:1px solid #000"></div>
<span class="t" style="left:1065.7px;top:839.5px;">B.</span>
<span class="t" style="left:1085.7px;top:839.5px;">CPU</span>
<div style="left:1114px;top:838px;width:36px;height:15px;background:#00ff00;border:1px solid #202020"></div>
<span class="t" style="left:1131.2px;top:839.5px;">%</span>
<div style="left:1061px;top:821px;width:88px;height:34px;border:1px solid rgba(255,255,255,.5);border-bottom:none;background:rgba(255,255,255,.08)"></div>
<div style="left:1138px;top:822px;width:1px;height:32px;background:rgba(255,255,255,.5)"></div>
<span class="ar" style="left:1066.5px;top:826px;font-size:18.5px;font-weight:bold;color:#fff;line-height:22px;letter-spacing:.35px;text-shadow:0 0 2px rgba(0,0,0,.45),0 1px 2px rgba(0,0,0,.3)">PRO</span>
<svg style="left:1106px;top:821px" width="32" height="32" viewBox="0 0 32 32"><path d="M5 2l13 5.5L29 2" fill="none" stroke="#777" stroke-width="1"/><rect x="2.5" y="6.5" width="27" height="19.5" rx="1.5" fill="#8e98a6" stroke="#737c8a" stroke-width="1"/><path d="M4 8h10L4 20Z" fill="#3a7cc4"/><path d="M14 8h6L8 24.5H4V20Z" fill="#62ac3a"/><path d="M20 8h5.5L13.5 24.5H8Z" fill="#f2da18"/><path d="M25.500 8h2.500v16.500H13.500Z" fill="#d62424"/><path d="M10 26h14v2.600H10Z" fill="#8792a0"/><path d="M8 28.500h18" stroke="#98a2ae" stroke-width="1"/><text x="4.600" y="23.400" font-family="Liberation Sans,sans-serif" font-weight="bold" font-size="18" fill="#fff">TV</text></svg>
<span class="ar" style="left:1139.500px;top:850px;width:30px;color:#fff;font-weight:bold;font-size:7.600px;line-height:9px;transform:rotate(-90deg);transform-origin:0 0;letter-spacing:0">.NET.UA</span>
</div></body></html>
